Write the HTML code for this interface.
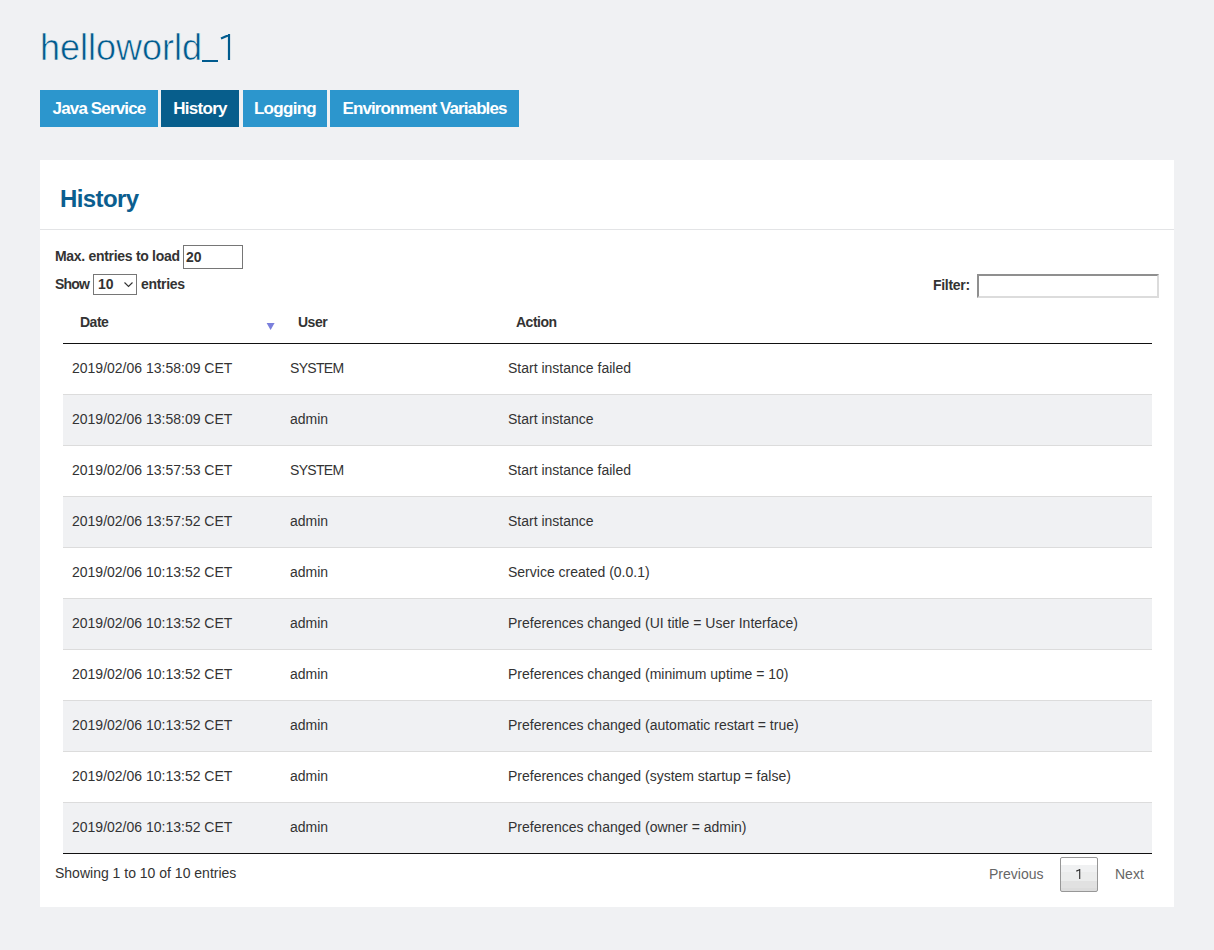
<!DOCTYPE html>
<html>
<head>
<meta charset="utf-8">
<style>
html,body{margin:0;padding:0;}
body{width:1214px;height:950px;background:#f0f1f3;font-family:"Liberation Sans",sans-serif;color:#333;position:relative;overflow:hidden;}
.abs{position:absolute;}
h1{position:absolute;left:40px;top:26px;margin:0;font-weight:normal;font-size:36px;line-height:44px;color:#005b8e;white-space:nowrap;letter-spacing:0px;-webkit-text-stroke:0.6px #f0f1f3;}
.tab{position:absolute;top:90px;height:37px;background:#2c96cd;color:#fff;font-weight:bold;font-size:17px;line-height:37px;text-align:center;white-space:nowrap;letter-spacing:-0.7px;}
.tab.active{background:#075e8c;}
.panel{position:absolute;left:40px;top:160px;width:1134px;height:747px;background:#fff;}
h2{position:absolute;left:60px;top:184px;margin:0;font-size:24px;line-height:30px;color:#0b5e8f;font-weight:bold;letter-spacing:-0.6px;}
.hr{position:absolute;left:40px;top:229px;width:1134px;height:1px;background:#e3e4e6;}
.lbl{position:absolute;font-size:14px;font-weight:bold;line-height:16px;white-space:nowrap;color:#333;}
.inp{position:absolute;box-sizing:border-box;border:1px solid #767676;background:#fff;font-size:14px;font-weight:bold;color:#333;}
.txt{position:absolute;font-size:14px;line-height:16px;white-space:nowrap;color:#333;}
.th{position:absolute;top:314px;font-size:14px;font-weight:bold;line-height:16px;color:#333;letter-spacing:-0.5px;}
.row{position:absolute;left:63px;width:1089px;height:50px;}
.row span{position:absolute;top:16px;font-size:14px;line-height:16px;white-space:nowrap;color:#333;}
.c1{left:9px;}.c2{left:227px;}.c3{left:445px;}
.sep{left:63px;width:1089px;height:1px;background:#dcdcdc;}
.btn{box-sizing:border-box;border:1px solid #979797;border-radius:2px;background:linear-gradient(#fff 0px,#fff 7px,#f0f1f2 7px,#f0f1f2 14px,#ebecec 14px,#ebecec 23px,#e1e1e1 23px,#e1e1e1 30px,#dcdcdc 30px);}
</style>
</head>
<body>
<h1>helloworld</h1>
<svg class="abs" style="left:0;top:0;" width="260" height="80"><path d="M202 61 H218" stroke="#005b8e" stroke-width="2" fill="none"/><path d="M221 38.6 L229 35 M229 34 V60" stroke="#005b8e" stroke-width="2.2" fill="none"/></svg>
<div class="tab" style="left:40px;width:118px;letter-spacing:-0.85px;">Java Service</div>
<div class="tab active" style="left:161px;width:78px;">History</div>
<div class="tab" style="left:243px;width:84px;">Logging</div>
<div class="tab" style="left:330px;width:189px;letter-spacing:-0.92px;">Environment Variables</div>

<div class="panel"></div>
<h2>History</h2>
<div class="hr"></div>

<div class="lbl" style="left:55px;top:248px;letter-spacing:-0.3px;">Max. entries to load</div>
<div class="inp" style="left:183px;top:245px;width:60px;height:24px;"></div>
<div class="lbl" style="left:186px;top:249px;">20</div>

<div class="lbl" style="left:55px;top:276px;letter-spacing:-0.8px;">Show</div>
<div class="inp" style="left:93px;top:274px;width:44px;height:21px;"></div>
<div class="lbl" style="left:98px;top:276px;">10</div>
<svg class="abs" style="left:123px;top:281px;" width="11" height="7" viewBox="0 0 11 7"><path d="M1.5 1.5 L5.5 5.5 L9.5 1.5" stroke="#333" stroke-width="1.1" fill="none"/></svg>
<div class="lbl" style="left:141px;top:276px;letter-spacing:-0.3px;">entries</div>

<div class="lbl" style="left:933px;top:277px;letter-spacing:-0.3px;">Filter:</div>
<div class="inp" style="left:977px;top:274px;width:182px;height:24px;border:2px solid;border-top-color:#8f8f8f;border-left-color:#8f8f8f;border-right-color:#dcdcdc;border-bottom-color:#dcdcdc;"></div>


<div class="th" style="left:80px;">Date</div>
<svg class="abs" style="left:266px;top:323px;" width="9" height="8" viewBox="0 0 9 8"><path d="M0.6 0 L8.6 0 L4.6 7 Z" fill="#7a7fdc"/></svg>
<div class="th" style="left:298px;">User</div>
<div class="th" style="left:516px;">Action</div>
<div class="abs" style="left:63px;top:343px;width:1089px;height:1px;background:#111;"></div>
<div class="row" style="top:344px;background:#fff;">
<span class="c1">2019/02/06 13:58:09 CET</span><span class="c2" style="letter-spacing:-0.7px;">SYSTEM</span><span class="c3">Start instance failed</span></div>
<div class="row" style="top:395px;background:#f0f1f3;">
<span class="c1">2019/02/06 13:58:09 CET</span><span class="c2">admin</span><span class="c3">Start instance</span></div>
<div class="abs sep" style="top:394px;"></div>
<div class="row" style="top:446px;background:#fff;">
<span class="c1">2019/02/06 13:57:53 CET</span><span class="c2" style="letter-spacing:-0.7px;">SYSTEM</span><span class="c3">Start instance failed</span></div>
<div class="abs sep" style="top:445px;"></div>
<div class="row" style="top:497px;background:#f0f1f3;">
<span class="c1">2019/02/06 13:57:52 CET</span><span class="c2">admin</span><span class="c3">Start instance</span></div>
<div class="abs sep" style="top:496px;"></div>
<div class="row" style="top:548px;background:#fff;">
<span class="c1">2019/02/06 10:13:52 CET</span><span class="c2">admin</span><span class="c3">Service created (0.0.1)</span></div>
<div class="abs sep" style="top:547px;"></div>
<div class="row" style="top:599px;background:#f0f1f3;">
<span class="c1">2019/02/06 10:13:52 CET</span><span class="c2">admin</span><span class="c3">Preferences changed (UI title = User Interface)</span></div>
<div class="abs sep" style="top:598px;"></div>
<div class="row" style="top:650px;background:#fff;">
<span class="c1">2019/02/06 10:13:52 CET</span><span class="c2">admin</span><span class="c3">Preferences changed (minimum uptime = 10)</span></div>
<div class="abs sep" style="top:649px;"></div>
<div class="row" style="top:701px;background:#f0f1f3;">
<span class="c1">2019/02/06 10:13:52 CET</span><span class="c2">admin</span><span class="c3">Preferences changed (automatic restart = true)</span></div>
<div class="abs sep" style="top:700px;"></div>
<div class="row" style="top:752px;background:#fff;">
<span class="c1">2019/02/06 10:13:52 CET</span><span class="c2">admin</span><span class="c3">Preferences changed (system startup = false)</span></div>
<div class="abs sep" style="top:751px;"></div>
<div class="row" style="top:803px;background:#f0f1f3;">
<span class="c1">2019/02/06 10:13:52 CET</span><span class="c2">admin</span><span class="c3">Preferences changed (owner = admin)</span></div>
<div class="abs sep" style="top:802px;"></div>
<div class="abs" style="left:63px;top:853px;width:1089px;height:1px;background:#111;"></div>
<div class="txt" style="left:55px;top:865px;">Showing 1 to 10 of 10 entries</div>
<div class="txt" style="left:989px;top:866px;color:#666;">Previous</div>
<div class="abs btn" style="left:1060px;top:857px;width:38px;height:35px;"></div>
<svg class="abs" style="left:1070px;top:865px;" width="20" height="20"><path d="M6.3 6.1 L9.5 4.7 M9.7 4.1 V14" stroke="#333" stroke-width="1.15" fill="none"/></svg>
<div class="txt" style="left:1115px;top:866px;color:#666;">Next</div>
</body>
</html>
